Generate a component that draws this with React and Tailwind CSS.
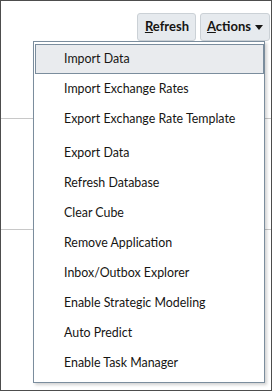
import React from "react";

const items1 = ["Import Data", "Import Exchange Rates", "Export Exchange Rate Template"];
const items2 = [
  "Export Data",
  "Refresh Database",
  "Clear Cube",
  "Remove Application",
  "Inbox/Outbox Explorer",
  "Enable Strategic Modeling",
  "Auto Predict",
  "Enable Task Manager",
];

function Item({ label, active }) {
  return (
    <div
      className={
        "h-[30px] flex items-center pl-[28px] ml-[1px] text-[12.4px] text-[#161513] " +
        (active ? "bg-[#e9ebee] border border-[#7b8d9d]" : "border border-transparent")
      }
    >
      {label}
    </div>
  );
}

export default function App() {
  return (
    <div
      className="relative w-[272px] h-[391px] bg-white border border-[#4d4d4d] overflow-hidden"
      style={{ fontFamily: "Lato, 'Noto Sans', sans-serif" }}
    >
      <div className="flex justify-end gap-[4px] pt-[12px] pr-[1px]">
        <button className="h-[28px] pl-[7px] pr-[6px] rounded-[3px] bg-[#e6eaee] border border-[#cbd1d6] text-[13px] font-bold text-[#161513]">
          <span className="underline">R</span>efresh
        </button>
        <button className="h-[28px] pl-[6px] pr-[6px] rounded-[3px] bg-[#e6eaee] border border-[#cbd1d6] text-[13px] font-bold text-[#161513] flex items-center gap-[4px]">
          <span>
            <span className="underline">A</span>ctions
          </span>
          <svg width="8" height="5" viewBox="0 0 8 5">
            <path d="M0 0 L8 0 L4 5 Z" fill="#161513" />
          </svg>
        </button>
      </div>
      <div className="mt-[77px] border-t border-[#c8c8c8]" />
      <div className="mt-[110px] border-t border-[#c8c8c8]" />

      <div className="absolute left-[32px] top-[40px] w-[232px] h-[342px] bg-white border border-[#7b8d9d] shadow-[2px_2px_3px_rgba(0,0,0,0.18)] pt-[2px]">
        {items1.map((l, i) => (
          <Item key={l} label={l} active={i === 0} />
        ))}
        <div className="h-[4px]" />
        {items2.map((l) => (
          <Item key={l} label={l} />
        ))}
      </div>
    </div>
  );
}
